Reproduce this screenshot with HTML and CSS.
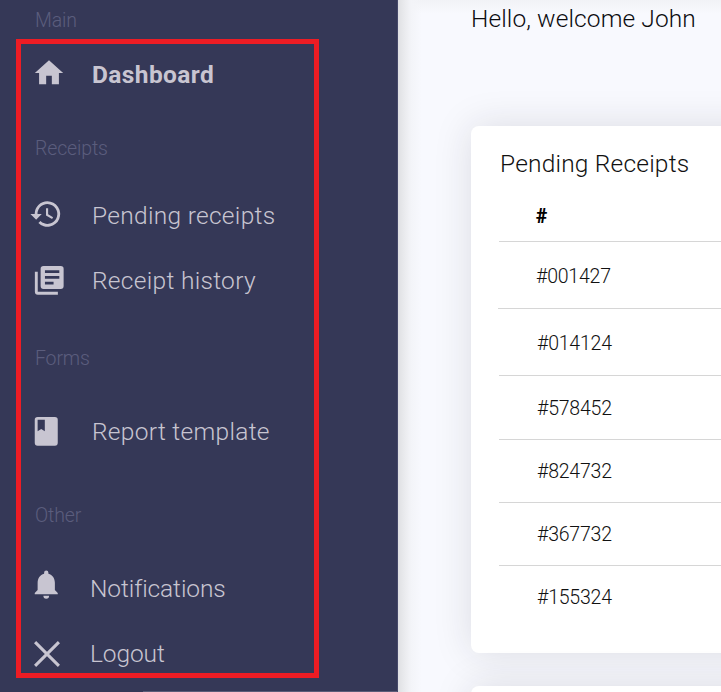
FILE: index.html
```html
<!DOCTYPE html>
<html lang="en">
<head>
<meta charset="utf-8">
<title>Receipts dashboard</title>
<link rel="stylesheet" href="styles.css">
</head>
<body>
<div class="app">
  <nav class="sidebar">
    <section class="group">
      <h2 class="label">Main</h2>
      <a class="item active"><span class="icon"><svg class="home" viewBox="0 0 24 24"><path d="M10 20v-6h4v6h5v-8h3L12 3 2 12h3v8z"/></svg></span><span class="text">Dashboard</span></a>
    </section>
    <section class="group receipts">
      <h2 class="label">Receipts</h2>
      <a class="item"><span class="icon"><svg class="history" viewBox="0 0 24 24"><path d="M13 3a9 9 0 0 0-9 9H1l3.9 3.9.1.1L9 12H6a7 7 0 1 1 2.06 4.94l-1.42 1.42A9 9 0 1 0 13 3zm-1 5v5l4.28 2.54.72-1.21-3.5-2.08V8z"/></svg></span><span class="text">Pending receipts</span></a>
      <a class="item"><span class="icon"><svg class="library" viewBox="0 0 24 24"><path d="M4 6H2v14a2 2 0 0 0 2 2h14v-2H4zm16-4H8a2 2 0 0 0-2 2v12a2 2 0 0 0 2 2h12a2 2 0 0 0 2-2V4a2 2 0 0 0-2-2zm-1 9H9V9h10zm-4 4H9v-2h6zm4-8H9V5h10z"/></svg></span><span class="text text-low">Receipt history</span></a>
    </section>
    <section class="group forms">
      <h2 class="label">Forms</h2>
      <a class="item"><span class="icon"><svg class="book" viewBox="0 0 24 24"><path d="M18 2H6a2 2 0 0 0-2 2v16a2 2 0 0 0 2 2h12a2 2 0 0 0 2-2V4a2 2 0 0 0-2-2zM6 4h5v8l-2.5-1.5L6 12z"/></svg></span><span class="text">Report template</span></a>
    </section>
    <section class="group other">
      <h2 class="label">Other</h2>
      <a class="item"><span class="icon"><svg class="bell" viewBox="0 0 24 24"><path d="M12 22a2 2 0 0 0 2-2h-4a2 2 0 0 0 2 2zm6-6v-5c0-3.07-1.64-5.64-4.5-6.32V4a1.5 1.5 0 0 0-3 0v.68C7.63 5.36 6 7.92 6 11v5l-2 2v1h16v-1z"/></svg></span><span class="text">Notifications</span></a>
      <a class="item"><span class="icon"><svg class="close" viewBox="0 0 24 24"><path d="M1 1l22 22M23 1L1 23"/></svg></span><span class="text text-low">Logout</span></a>
    </section>
    <div class="sidebar-rule"></div>
  </nav>
  <main class="content">
    <h1 class="welcome">Hello, welcome John</h1>
    <section class="card">
      <h2 class="title">Pending Receipts</h2>
      <div class="row head"><b>#</b></div>
      <div class="row r1"><span>#001427</span></div>
      <div class="row r2"><span>#014124</span></div>
      <div class="row r3"><span>#578452</span></div>
      <div class="row r4"><span>#824732</span></div>
      <div class="row r5"><span>#367732</span></div>
      <div class="row r6"><span>#155324</span></div>
    </section>
    <section class="card next"></section>
  </main>
  <div class="highlight"></div>
</div>
</body>
</html>
```
FILE: styles.css
```css
* { box-sizing: border-box; }
body { margin: 0; font-family: Roboto, "Liberation Sans", sans-serif; font-weight: 300; }
h1, h2 { margin: 0; font-weight: 300; }
.app { position: relative; display: flex; width: 721px; height: 692px; overflow: hidden; background: #f8f9fe; }

.sidebar { display: flex; flex-direction: column; width: 398px; flex: none; background: #353857; color: #c8c5d1; border-right: 1px solid #46496a; }
.label { height: 40px; padding: 1px 0 0 35px; font-size: 19.5px; line-height: 40px; color: #5b5d7d; letter-spacing: -.15px; }
.item { display: flex; align-items: center; height: 64px; padding-left: 29px; font-size: 24.5px; white-space: nowrap; letter-spacing: .3px; }
.text { padding-bottom: 1px; }
.text-low { padding: 1px 0 0; }
.group > .label + .item { margin-top: 16px; }
.group:first-child > .label + .item { margin-top: 3px; }
.receipts { margin-top: 21px; }
.forms { margin-top: 26px; }
.forms > .label + .item { margin-top: 22px; }
.other { margin-top: 31px; }
.other > .label + .item { margin-top: 22px; }
.other > .item { letter-spacing: -.1px; }
.other .icon { width: 61px; }
.icon { display: flex; align-items: center; width: 63px; height: 40px; flex: none; }
.icon svg { width: 34.5px; height: 34.5px; fill: currentColor; }
.icon .home { width: 34px; height: 34px; margin: 0 0 4px 3px; }
.icon .history { width: 34px; height: 34px; margin: 0 0 4px 0; }
.icon .library { margin-left: 3px; }
.icon .book { margin-bottom: 2px; }
.icon .bell { margin-bottom: 10px; }
.icon .close { width: 26px; height: 26px; margin: 1px 0 0 5px; fill: none; stroke: currentColor; stroke-width: 2.8; }
.item.active { font-weight: 700; letter-spacing: .4px; }
.sidebar-rule { height: 1px; margin: auto 0 0 143px; background: #5b5d78; }

.content { flex: 1; min-width: 0; padding-left: 73px; overflow: hidden; background: linear-gradient(90deg, #dfe0e3 0, #e9eaed 6px, #f3f4f8 13px, rgba(248, 249, 254, 0) 24px), linear-gradient(#f1f2f6, rgba(248, 249, 254, 0) 14px); }
.welcome { height: 126px; font-size: 24.5px; line-height: 38px; color: #0c0c10; white-space: nowrap; letter-spacing: .1px; }
.card { width: 700px; height: 527px; padding-left: 28px; border-radius: 8px; background: #fff; color: #111; box-shadow: 0 0 38px rgba(30, 30, 50, .13); }
.title { height: 66px; padding: 18px 0 0 1px; font-size: 24.5px; line-height: 39px; white-space: nowrap; letter-spacing: .2px; }
.row { display: flex; align-items: center; height: 67px; margin-left: 0; padding-left: 38px; border-bottom: 1px solid #d6d6d6; font-size: 19.5px; letter-spacing: -.2px; }
.head { height: 50px; padding-left: 37px; color: #000; }
.head b { font-weight: 900; }
.r1, .r2 { padding-top: 3px; }
.r1 { margin-left: -1px; }
.r3 { height: 64px; padding-top: 1px; }
.r4, .r5 { height: 63px; }
.r6 { height: 62px; border-bottom: 0; }
.next { margin-top: 33px; height: 60px; }

.highlight { position: absolute; left: 16px; top: 39px; width: 303px; height: 639px; border: 5px solid #ed1c24; pointer-events: none; }
```
